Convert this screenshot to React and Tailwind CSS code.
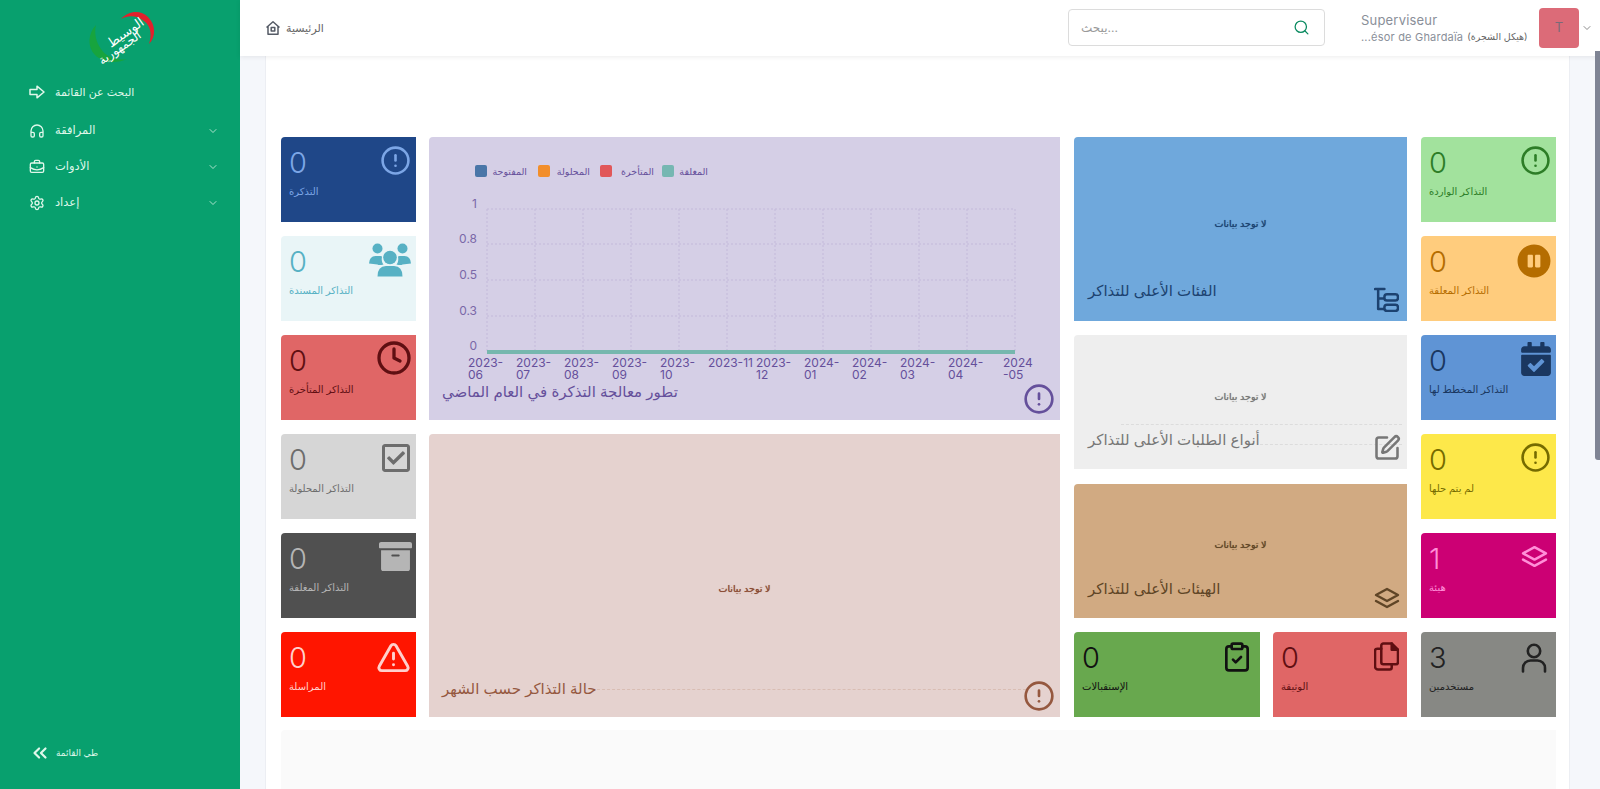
import React from "react";
import { Search, ChevronDown, ChevronsLeft, CircleAlert, Clock, TriangleAlert, ClipboardCheck, SquarePen, Headphones, BriefcaseBusiness, Settings } from "lucide-react";
import { FaPauseCircle, FaCalendarCheck, FaRegCheckSquare, FaArchive } from "react-icons/fa";

const Copy = ({ className }) => (
  <svg viewBox="0 0 24 28" fill="none" stroke="currentColor" strokeWidth="2.4" strokeLinejoin="round" strokeLinecap="round" className={className}>
    <path d="M9 2h8l6 6v12a2 2 0 0 1-2 2H9a2 2 0 0 1-2-2V4a2 2 0 0 1 2-2z" />
    <path d="M7 7H3a2 2 0 0 0-2 2v15a3 3 0 0 0 3 3h11a2 2 0 0 0 2-2v-3" />
    <path d="M17 2v6h6" fill="currentColor" />
  </svg>
);
const Tree = ({ className }) => (
  <svg viewBox="0 0 24 24" fill="none" stroke="currentColor" strokeWidth="2.4" strokeLinejoin="round" strokeLinecap="round" className={className}>
    <path d="M1 2h9M4 2v19h5M4 11h5" />
    <rect x="10" y="7" width="13" height="6" rx="2.5" />
    <rect x="10" y="17" width="13" height="6" rx="2.5" />
  </svg>
);
const TwoLayers = ({ className }) => (
  <svg viewBox="0 0 26 22" fill="none" stroke="currentColor" strokeWidth="2.4" strokeLinejoin="round" strokeLinecap="round" className={className}>
    <path d="M13 2 24 8 13 14 2 8z" />
    <path d="M2 14 13 20 24 14" />
  </svg>
);
const Person = ({ className }) => (
  <svg viewBox="0 0 28 30" fill="none" stroke="currentColor" strokeWidth="2.6" strokeLinecap="round" className={className}>
    <circle cx="14" cy="8" r="6.2" />
    <path d="M3 28.5V25a7.5 7.5 0 0 1 7.5-7.5h7A7.5 7.5 0 0 1 25 25v3.5" />
  </svg>
);
const Group = ({ className }) => (
  <svg viewBox="0 0 42 34" fill="currentColor" className={className}>
    <circle cx="8.5" cy="5.5" r="5" />
    <circle cx="33.5" cy="5.5" r="5" />
    <circle cx="21" cy="14.5" r="6.8" />
    <path d="M8.5 33.5Q8.5 23 17 23h8q8.5 0 8.5 10.500z" />
    <path d="M0 20.500Q.5 13 6.500 13h5q1 0 1.500.5-1 5 1.500 8-4.500 1-6 0z" />
    <path d="M42 20.500Q41.500 13 35.500 13h-5q-1 0-1.500.5 1 5-1.500 8 4.500 1 6 0z" />
  </svg>
);
const HomeIcon = () => (
  <svg viewBox="0 0 16 16" fill="none" stroke="#555b66" strokeWidth="1.5" strokeLinejoin="round" className="w-4 h-4">
    <path d="M1.5 7.5 8 1.800l6.500 5.700M3 6.500v7.700h10V6.500" />
    <rect x="6.200" y="7.500" width="3.600" height="3.400" />
  </svg>
);
const ArrowOutline = () => (
  <svg viewBox="0 0 16 14" fill="none" stroke="currentColor" strokeWidth="1.5" strokeLinejoin="round" className="w-[16px] h-[14px]">
    <path d="M1 4.600h7V1.200L15 7l-7 5.800V9.400H1z" />
  </svg>
);

function Tile({ n, label, bg, fg, icon, full }) {
  return (
    <div className={`${full ? "w-full" : "w-[135px]"} h-[85px] rounded-tl-[4px] px-2 pt-[8px] flex flex-col ${bg} ${fg}`}>
      <div className="flex items-start justify-between h-[36px]">
        <span className="text-[29px] leading-[36px] font-light">{n}</span>
        {icon}
      </div>
      <div className="text-[10px] leading-[14px] mt-[3px]">{label}</div>
    </div>
  );
}

const NoData = ({ className }) => <div className={`text-[9.5px] text-center [text-shadow:0_0_0.7px_currentColor] ${className}`}>لا توجد بيانات</div>;

function Chart() {
  const xs = [487, 535, 583, 631, 679, 727, 775, 823, 871, 919, 967, 1015].map((x) => x - 429);
  const ys = [209, 244, 280, 316, 352].map((y) => y - 137);
  const yl = [["1", 71], ["0.8", 106], ["0.5", 142], ["0.3", 178], ["0", 213]];
  const xl = [["2023-", "06"], ["2023-", "07"], ["2023-", "08"], ["2023-", "09"], ["2023-", "10"], ["2023-11", ""], ["2023-", "12"], ["2024-", "01"], ["2024-", "02"], ["2024-", "03"], ["2024-", "04"], ["2024", "-05"]];
  const xp = [39, 87, 135, 183, 231, 279, 327, 375, 423, 471, 519, 574];
  const legend = [["#4a76a8", "المفتوحة", 46, 98], ["#f28e2b", "المحلولة", 109, 161], ["#e15759", "المتأخرة", 171, 225], ["#76b7b2", "المغلقة", 233, 279]];
  return (
    <svg width="631" height="245" className="block text-[#65509b] shrink-0" style={{ fontFamily: "Inter, 'DejaVu Sans', sans-serif" }}>
      {legend.map(([c, t, x, e]) => (
        <g key={t}>
          <rect x={x} y="28" width="12" height="12" rx="2" fill={c} />
          <text x={e} y="38" fontSize="9.5" textAnchor="end" fill="#65509b">{t}</text>
        </g>
      ))}
      {xs.map((x) => <line key={x} x1={x} x2={x} y1={ys[0]} y2={ys[4]} stroke="#c3b9da" strokeDasharray="2 2" />)}
      {ys.map((y) => <line key={y} x1={xs[0]} x2={xs[11]} y1={y} y2={y} stroke="#c3b9da" strokeDasharray="2 2" />)}
      <rect x={xs[0]} y="213" width={xs[11] - xs[0]} height="4" fill="#76b7ae" />
      {yl.map(([t, y]) => <text key={t} x="48" y={y} fontSize="12" textAnchor="end" fill="#7a68a8">{t}</text>)}
      {xl.map(([a, b], i) => (
        <g key={i} fontSize="12" fill="#65509b">
          <text x={xp[i]} y="230">{a}</text>
          {b && <text x={xp[i]} y="242">{b}</text>}
        </g>
      ))}
    </svg>
  );
}

function Logo() {
  return (
    <svg viewBox="0 0 90 65" className="w-[90px] h-[65px]">
      <path d="M44 14C52 5 64 5 71 12C79 20 79 32 72 39C75 30 74 21 67 16C60 10 51 10 44 14z" fill="#e2202c" />
      <path d="M19 20C11 28 10 42 18 50C26 58 40 59 50 54C40 56 29 52 24 44C19 37 17 28 19 20z" fill="#17a43e" />
      <g fill="#ffffff" fontFamily="'DejaVu Sans', sans-serif">
        <text x="51" y="31" fontSize="13" textAnchor="middle" transform="rotate(-35 51 31)">الوسيط</text>
        <text x="45" y="46" fontSize="12" textAnchor="middle" transform="rotate(-35 45 46)">الجمهورية</text>
      </g>
    </svg>
  );
}

const menu = [
  ["المرافقة", <Headphones key="a" className="w-[16px] h-[16px]" strokeWidth={2} />],
  ["الأدوات", <BriefcaseBusiness key="b" className="w-[16px] h-[16px]" strokeWidth={2} />],
  ["إعداد", <Settings key="c" className="w-[16px] h-[16px]" strokeWidth={2} />],
];

const ic = "w-[31px] h-[31px] shrink-0 -mr-[3px]";

export default function App() {
  return (
    <div className="flex h-screen overflow-hidden relative font-['Inter','DejaVu_Sans',sans-serif] bg-[#f5f7fb]">
      <aside className="w-[240px] shrink-0 bg-[#08a06e] text-[#dff7ea] flex flex-col">
        <div className="flex justify-center pt-[5px] pl-[4px]"><Logo /></div>
        <div className="pl-[29px] pr-[21px] mt-[4px] flex-1">
          <div className="flex items-center gap-[10px] h-[36px] mb-[3px] text-[11px]"><ArrowOutline /><span>البحث عن القائمة</span></div>
          {menu.map(([t, i]) => (
            <div key={t} className="flex items-center gap-[10px] h-[36px] text-[11.5px]">
              {i}
              <span>{t}</span>
              <ChevronDown className="w-[12px] h-[12px] ml-auto" strokeWidth={1.5} />
            </div>
          ))}
        </div>
        <div className="flex items-center gap-[5px] pl-[29px] pb-[25px] text-[9px]">
          <ChevronsLeft className="w-[22px] h-[22px]" strokeWidth={2.4} />
          <span>طي القائمة</span>
        </div>
      </aside>

      <div className="flex-1 flex flex-col min-w-0">
        <header className="h-[56px] shrink-0 bg-white relative z-10 shadow-[0_1px_5px_rgba(0,0,0,0.08)] flex items-center pl-[25px] pr-[7px]">
          <div className="flex items-center gap-[5px] text-[11px] text-[#666]"><HomeIcon /><span>الرئيسية</span></div>
          <div className="ml-auto w-[257px] h-[37px] border border-[#dcdcdc] rounded-[4px] flex items-center justify-between pl-[12px] pr-[14px] mb-[1px]">
            <input placeholder="يبحث..." className="w-[180px] text-[12px] outline-none placeholder:text-[#9a9a9a]" readOnly />
            <Search className="w-[17px] h-[17px] text-[#0a8a60]" strokeWidth={1.8} />
          </div>
          <div className="ml-[36px] w-[172px] text-[#8a8f99] whitespace-nowrap">
            <div className="text-[13px] leading-[18px] tracking-[0.2px]">Superviseur</div>
            <div className="text-[11px] leading-[16px] flex items-center gap-1 tracking-[0.2px]"><span>...ésor de Ghardaïa</span><span className="text-[9.5px] text-[#666]">(هيكل الشجرة)</span></div>
          </div>
          <div className="w-[40px] h-[40px] rounded-[4px] bg-[#dc6b78] text-[#7a6a78] flex items-center justify-center text-[13px] ml-[6px]">T</div>
          <ChevronDown className="w-[12px] h-[12px] text-[#666] ml-[2px]" strokeWidth={1.5} />
        </header>

        <main className="flex-1 min-h-0 pl-[25px]">
          <div className="w-[1305px] h-full bg-white border-x border-[#eceef3] pt-[81px] pl-[15px]">
            <div className="grid grid-cols-[134px_631px_333px_135px] grid-rows-[repeat(6,85px)] gap-[14px]">
              <div className="row-start-1 col-start-1"><Tile n="0" label="التذكرة" bg="bg-[#1f4788]" fg="text-[#7ca6e6]" icon={<CircleAlert className={ic} strokeWidth={2} />} /></div>
              <div className="row-start-2 col-start-1"><Tile n="0" label="التذاكر المسندة" bg="bg-[#e9f5f7]" fg="text-[#57b1c4]" icon={<Group className="w-[42px] h-[34px] -mt-[1px] -mr-[3px]" />} /></div>
              <div className="row-start-3 col-start-1"><Tile n="0" label="التذاكر المتأخرة" bg="bg-[#e06666]" fg="text-[#5f0f12]" icon={<Clock className="w-[36px] h-[36px] -mt-[3px] -mr-[4px]" strokeWidth={2.2} />} /></div>
              <div className="row-start-4 col-start-1"><Tile n="0" label="التذاكر المحلولة" bg="bg-[#d6d6d6]" fg="text-[#6d6d6d]" icon={<FaRegCheckSquare className="w-[32px] h-[32px] -mr-[4px]" />} /></div>
              <div className="row-start-5 col-start-1"><Tile n="0" label="التذاكر المغلقة" bg="bg-[#505050]" fg="text-[#b5b5b5]" icon={<FaArchive className="w-[33px] h-[33px] -mt-[1px] -mr-[4px]" />} /></div>
              <div className="row-start-6 col-start-1"><Tile n="0" label="المراسلة" bg="bg-[#ff1500]" fg="text-[#ffd0cc]" icon={<TriangleAlert className="w-[35px] h-[35px] -mr-[3px]" strokeWidth={2} />} /></div>

              <div className="col-start-2 row-start-1 row-span-3 bg-[#d5cfe6] rounded-tl-[4px] relative flex flex-col text-[#65509b]">
                <Chart />
                <div className="text-[15px] leading-[20px] pl-[13px]">تطور معالجة التذكرة في العام الماضي</div>
                <CircleAlert className="absolute right-[5px] bottom-[5px] w-[32px] h-[32px]" strokeWidth={2} />
              </div>
              <div className="col-start-2 row-start-4 row-span-3 bg-[#e5d2cf] rounded-tl-[4px] relative flex flex-col text-[#95583f]">
                <NoData className="mt-[148px] text-[#8a4a32]" />
                <div className="mt-auto mb-[18px] pl-[13px] flex items-center">
                  <span className="text-[15px] leading-[20px]">حالة التذاكر حسب الشهر</span>
                  <span className="flex-1 border-t border-dashed border-[#d9bdb3] mr-[34px]" />
                </div>
                <CircleAlert className="absolute right-[5px] bottom-[5px] w-[32px] h-[32px]" strokeWidth={2} />
              </div>

              <div className="col-start-3 row-start-1 row-span-2 bg-[#6fa8dc] rounded-tl-[4px] relative text-[#1c4270] flex flex-col">
                <NoData className="mt-[80px]" />
                <div className="mt-auto mb-[20px] pl-[14px] text-[15px] leading-[20px]">الفئات الأعلى للتذاكر</div>
                <Tree className="absolute right-[8px] bottom-[9px] w-[25px] h-[25px]" />
              </div>
              <div className="col-start-3 row-start-3 row-span-3 flex flex-col gap-[15px]">
                <div className="h-[134px] bg-[#eeeeee] rounded-tl-[4px] relative text-[#777] flex flex-col">
                  <NoData className="mt-[55px]" />
                  <div className="border-t border-dashed border-[#dcdcdc] ml-[47px] mr-[5px] mt-[20px]" />
                  <div className="flex items-center pl-[14px] mt-[2px]">
                    <span className="text-[15px] leading-[26px]">أنواع الطلبات الأعلى للتذاكر</span>
                    <span className="flex-1 border-t border-dashed border-[#dcdcdc] mr-[5px] mt-[8px]" />
                  </div>
                  <SquarePen className="absolute right-[6px] bottom-[7px] w-[28px] h-[28px]" strokeWidth={2.2} />
                </div>
                <div className="h-[134px] bg-[#d1aa82] rounded-tl-[4px] relative text-[#5f4526] flex flex-col">
                  <NoData className="mt-[54px]" />
                  <div className="mt-auto mb-[19px] pl-[14px] text-[15px] leading-[20px]">الهيئات الأعلى للتذاكر</div>
                  <TwoLayers className="absolute right-[7px] bottom-[9px] w-[26px] h-[22px]" />
                </div>
              </div>
              <div className="col-start-3 row-start-6 flex gap-[13px]">
                <div className="w-[186px]"><Tile full n="0" label="الإستقبالات" bg="bg-[#68a84e]" fg="text-[#111111]" icon={<ClipboardCheck className="w-[32px] h-[32px] -mr-[1px] mt-[1px]" strokeWidth={2} />} /></div>
                <div className="w-[134px]"><Tile full n="0" label="الوثيقة" bg="bg-[#e06666]" fg="text-[#5f0f12]" icon={<Copy className="w-[25px] h-[30px] mt-[1px]" />} /></div>
              </div>

              <div className="col-start-4 row-start-1"><Tile n="0" label="التذاكر الواردة" bg="bg-[#a2e29d]" fg="text-[#2d7d27]" icon={<CircleAlert className={ic} strokeWidth={2} />} /></div>
              <div className="col-start-4 row-start-2"><Tile n="0" label="التذاكر المعلقة" bg="bg-[#ffcc7d]" fg="text-[#b56d00]" icon={<FaPauseCircle className="w-[34px] h-[34px] -mr-[3px]" />} /></div>
              <div className="col-start-4 row-start-3"><Tile n="0" label="التذاكر المخطط لها" bg="bg-[#5f94d5]" fg="text-[#1a3760]" icon={<FaCalendarCheck className="w-[30px] h-[34px] -mt-[1px] -mr-[3px]" />} /></div>
              <div className="col-start-4 row-start-4"><Tile n="0" label="لم يتم حلها" bg="bg-[#fde84a]" fg="text-[#756b00]" icon={<CircleAlert className={ic} strokeWidth={2} />} /></div>
              <div className="col-start-4 row-start-5"><Tile n="1" label="هيئة" bg="bg-[#cc0074]" fg="text-[#ff8fd8]" icon={<TwoLayers className="w-[27px] h-[23px] mt-[4px]" />} /></div>
              <div className="col-start-4 row-start-6"><Tile n="3" label="مستخدمين" bg="bg-[#878884]" fg="text-[#222222]" icon={<Person className="w-[28px] h-[30px] mt-[3px]" />} /></div>
            </div>
            <div className="mt-[13px] w-[1275px] h-[80px] bg-[#fafafa] rounded-tl-[4px]" />
          </div>
        </main>
      </div>
      <div className="absolute top-[51px] right-0 w-[5px] h-[409px] bg-[#7f8494] rounded-bl-[3px] z-20" />
    </div>
  );
}
